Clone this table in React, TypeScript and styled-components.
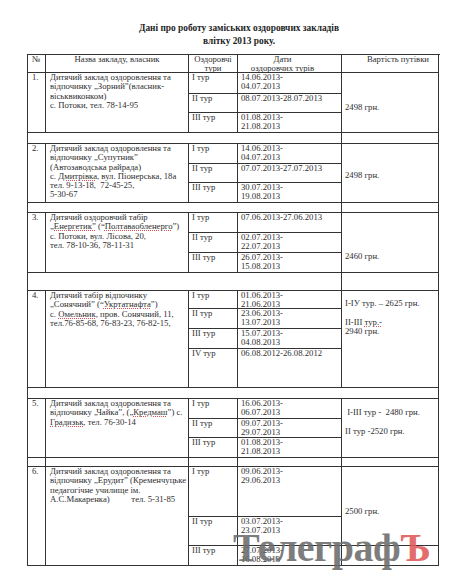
import React from "react";
import styled, { createGlobalStyle } from "styled-components";

const Global = createGlobalStyle`
  html, body { margin: 0; padding: 0; background: #fff; }
  body { font-family: "Liberation Serif", "Times New Roman", serif; color: #2e2e2e; }
`;

const Page = styled.div`
  position: relative;
  width: 450px;
  height: 582px;
  padding: 22px 0 0 27px;
  box-sizing: border-box;
  overflow: hidden;
`;

const Title = styled.h1`
  margin: 0;
  width: 412px;
  padding-left: 12px;
  box-sizing: border-box;
  text-align: center;
  font-size: 9.4px;
  line-height: 13px;
  font-weight: bold;
  color: #1e1e1e;
`;

const Table = styled.div`
  margin-top: 6px;
  width: 412px;
  border-left: 1px solid #333;
  border-top: 1px solid #333;
  display: flex;
  flex-direction: column;
`;

const Grid = styled.div<{ $rows: string }>`
  display: grid;
  grid-template-columns: 18px 143px 49px 104px 97px;
  grid-template-rows: ${(p) => p.$rows};
`;

const Cell = styled.div<{ $col: string; $row?: string; $pl?: number; $pt?: number; $align?: string; $pr?: number }>`
  grid-column: ${(p) => p.$col};
  grid-row: ${(p) => p.$row ?? "auto"};
  border-right: 1px solid #333;
  border-bottom: 1px solid #333;
  box-sizing: border-box;
  padding: ${(p) => p.$pt ?? 0}px ${(p) => p.$pr ?? 0}px 0 ${(p) => p.$pl ?? 3}px;
  font-size: 8.7px;
  line-height: 9.3px;
  white-space: pre;
  text-align: ${(p) => p.$align ?? "left"};
  min-width: 0;
`;

const Spell = styled.span`
  text-decoration: underline dotted #e05050;
  text-decoration-thickness: 1px;
  text-underline-offset: 1px;
`;

const Watermark = styled.div`
  position: absolute;
  left: 233px;
  top: 528px;
  font-family: "Liberation Serif", "Times New Roman", serif;
  font-weight: bold;
  font-size: 40px;
  line-height: 40px;
  letter-spacing: -0.5px;
  color: #6c6c6c;
  opacity: 0.88;
  white-space: nowrap;
  pointer-events: none;
`;

const Hard = styled.span`
  color: #e05858;
`;

type Tour = [string, string];
type Entry = {
  n: string;
  rows: string;
  name: React.ReactNode;
  tours: Tour[];
  price: React.ReactNode;
  pricePt: number;
  priceSpan: number;
  spacer?: { h: number; kind: "split" | "full" | "all" };
};

const entries: Entry[] = [
  {
    n: "1.",
    rows: "21px 19px 20px",
    name: (
      <>
        Дитячий заклад оздоровлення та<br />
        відпочинку „Зорний”(власник-<br />
        віськвиконком)<br />
        с. Потоки, тел. 78-14-95
      </>
    ),
    tours: [
      ["I тур", "14.06.2013-\n04.07.2013"],
      ["II тур", "08.07.2013-28.07.2013"],
      ["III тур", "01.08.2013-\n21.08.2013"],
    ],
    price: "2498 грн.",
    pricePt: 30,
    priceSpan: 3,
    spacer: { h: 11, kind: "split" },
  },
  {
    n: "2.",
    rows: "20px 19px 20px",
    name: (
      <>
        Дитячий заклад оздоровлення та<br />
        відпочинку „Супутник”<br />
        (Автозаводська райрада)<br />
        с. <Spell>Дмитрівка</Spell>, вул. Піонерська, 18а<br />
        {"тел. 9-13-18,  72-45-25,"}<br />
        5-30-67
      </>
    ),
    tours: [
      ["I тур", "14.06.2013-\n04.07.2013"],
      ["II тур", "07.07.2013-27.07.2013"],
      ["III тур", "30.07.2013-\n19.08.2013"],
    ],
    price: "2498 грн.",
    pricePt: 27,
    priceSpan: 3,
    spacer: { h: 10, kind: "split" },
  },
  {
    n: "3.",
    rows: "20px 20px 20px",
    name: (
      <>
        Дитячий оздоровчий табір<br />
        <Spell>„Енергетик”</Spell> (“<Spell>Полтаваобленерго</Spell>”)<br />
        с. Потоки, вул. Лісова, 20,<br />
        тел. 78-10-36, 78-11-31
      </>
    ),
    tours: [
      ["I тур", "07.06.2013-27.06.2013"],
      ["II тур", "02.07.2013-\n22.07.2013"],
      ["III тур", "26.07.2013-\n15.08.2013"],
    ],
    price: "2460 грн.",
    pricePt: 39,
    priceSpan: 3,
    spacer: { h: 18, kind: "split" },
  },
  {
    n: "4.",
    rows: "18px 20px 20px 39px",
    name: (
      <>
        Дитячий табір відпочинку<br />
        „Сонячний” (“<Spell>Укртатнафта</Spell>”)<br />
        с. <Spell>Омельник</Spell>, пров. Сонячний, 11,<br />
        тел.76-85-68, 76-83-23, 76-82-15,
      </>
    ),
    tours: [
      ["I тур", "01.06.2013-\n21.06.2013"],
      ["II тур", "23.06.2013-\n13.07.2013"],
      ["III тур", "15.07.2013-\n04.08.2013"],
      ["IV тур", "06.08.2012-26.08.2012"],
    ],
    price: (
      <>
        {"I-IУ тур. – 2625 грн."}
        <br />
        <br />
        II-III <Spell>тур.-</Spell>
        <br />
        2940 грн.
      </>
    ),
    pricePt: 8,
    priceSpan: 4,
    spacer: { h: 11, kind: "full" },
  },
  {
    n: "5.",
    rows: "20px 19px 20px",
    name: (
      <>
        Дитячий заклад оздоровлення та<br />
        відпочинку „Чайка”, („<Spell>Кредмаш</Spell>”) с.<br />
        <Spell>Градизьк</Spell>, тел. 76-30-14
      </>
    ),
    tours: [
      ["I тур", "16.06.2013-\n06.07.2013"],
      ["II тур", "09.07.2013-\n29.07.2013"],
      ["III тур", "01.08.2013-\n21.08.2013"],
    ],
    price: (
      <>
        {" I-III тур -  2480 грн."}
        <br />
        <br />
        {"II тур -2520 грн."}
      </>
    ),
    pricePt: 9,
    priceSpan: 3,
    spacer: { h: 9, kind: "all" },
  },
  {
    n: "6.",
    rows: "50px 29px 20px",
    name: (
      <>
        Дитячий заклад оздоровлення та<br />
        відпочинку „Ерудит” (Кременчуцьке<br />
        педагогічне училище ім.<br />
        {"А.С.Макаренка)          тел. 5-31-85"}
      </>
    ),
    tours: [
      ["I тур", "09.06.2013-\n29.06.2013"],
      ["II тур", "03.07.2013-\n23.07.2013"],
      ["III тур", "27.07.2013-\n16.08.2013"],
    ],
    price: "2500 грн.",
    pricePt: 40,
    priceSpan: 2,
  },
];

function Spacer({ h, kind }: { h: number; kind: "split" | "full" | "all" }) {
  if (kind === "full") {
    return (
      <Grid $rows={`${h}px`}>
        <Cell $col="1 / 6" />
      </Grid>
    );
  }
  if (kind === "split") {
    return (
      <Grid $rows={`${h}px`}>
        <Cell $col="1 / 5" />
        <Cell $col="5" />
      </Grid>
    );
  }
  return (
    <Grid $rows={`${h}px`}>
      <Cell $col="1" />
      <Cell $col="2" />
      <Cell $col="3" />
      <Cell $col="4" />
      <Cell $col="5" />
    </Grid>
  );
}

function EntryBlock({ e }: { e: Entry }) {
  const total = e.tours.length;
  return (
    <>
      <Grid $rows={e.rows}>
        <Cell $col="1" $row="1 / -1" $pl={4}>
          {e.n}
        </Cell>
        <Cell $col="2" $row="1 / -1" $pl={4}>
          {e.name}
        </Cell>
        {e.tours.map(([t, d], i) => (
          <React.Fragment key={t}>
            <Cell $col="3" $row={`${i + 1}`} $pl={3}>
              {t}
            </Cell>
            <Cell $col="4" $row={`${i + 1}`} $pl={3}>
              {d}
            </Cell>
          </React.Fragment>
        ))}
        <Cell $col="5" $row={`1 / span ${e.priceSpan}`} $pt={e.pricePt} $pl={3}>
          {e.price}
        </Cell>
        {e.priceSpan < total && <Cell $col="5" $row={`${e.priceSpan + 1} / -1`} />}
      </Grid>
      {e.spacer && <Spacer h={e.spacer.h} kind={e.spacer.kind} />}
    </>
  );
}

export default function App() {
  return (
    <>
      <Global />
      <Page>
        <Title>
          Дані про роботу заміських оздоровчих закладів
          <br />
          влітку 2013 року.
        </Title>
        <Table>
          <Grid $rows="18px">
            <Cell $col="1" $pl={4}>№</Cell>
            <Cell $col="2" $align="center" $pl={0}>
              Назва закладу, власник
            </Cell>
            <Cell $col="3" $align="center" $pl={0}>
              {"Оздоровчі\nтури"}
            </Cell>
            <Cell $col="4" $align="center" $pl={0} $pr={14}>
              {"Дати\nоздоровчих турів"}
            </Cell>
            <Cell $col="5" $align="center" $pl={16}>
              Вартість путівки
            </Cell>
          </Grid>
          {entries.map((e) => (
            <EntryBlock key={e.n} e={e} />
          ))}
        </Table>
        <Watermark>
          Телеграф<Hard>Ъ</Hard>
        </Watermark>
      </Page>
    </>
  );
}
